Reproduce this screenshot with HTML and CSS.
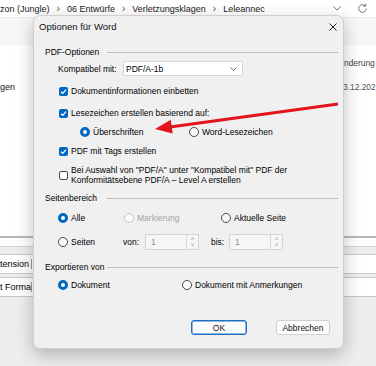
FILE: index.html
```html
<!DOCTYPE html>
<html lang="de">
<head>
  <meta charset="UTF-8">
  <title>Optionen für Word</title>
  <link rel="stylesheet" href="styles.css">
</head>
<body>
  <!-- Explorer im Hintergrund -->
  <div class="explorer">
    <div class="crumbs">
      <span>zon (Jungle)</span><i>&rsaquo;</i>
      <span>06 Entwürfe</span><i>&rsaquo;</i>
      <span>Verletzungsklagen</span><i>&rsaquo;</i>
      <span>Leleannec</span>
      <div class="crumb-tools">
        <svg width="8" height="5" viewBox="0 0 8 5"><polyline points="0.5,0.5 4,4 7.5,0.5" fill="none" stroke="#777" stroke-width="1"/></svg>
        <svg width="11" height="11" viewBox="0 0 11 11"><path d="M9.3 5.5a3.8 3.8 0 1 1-1.1-2.7" fill="none" stroke="#777" stroke-width="1"/><polyline points="8.6,0.8 8.6,3.2 6.2,3.2" fill="none" stroke="#777" stroke-width="1"/></svg>
      </div>
    </div>
    <div class="toolbar"></div>
    <div class="files">
      <div></div><div class="col-head">nderung</div>
      <div class="file-name">gen</div><div class="file-date">3.12.202</div>
    </div>
    <div class="lower">
      <div class="strip"></div>
      <div class="field"><span>tension</span></div>
      <div class="field"><span>t Forma</span></div>
    </div>
  </div>

  <!-- Dialog -->
  <div class="dialog">
    <div class="titlebar">
      <span>Optionen für Word</span>
      <svg width="8" height="8" viewBox="0 0 8 8"><path d="M0.5 0.5L7.5 7.5M7.5 0.5L0.5 7.5" stroke="#222" stroke-width="1"/></svg>
    </div>
    <div class="content">
      <div class="group-head mt8"><span>PDF-Optionen</span><div class="rule"></div></div>

      <div class="row compat mt2">
        <span class="lbl">Kompatibel mit:</span>
        <div class="select">PDF/A-1b
          <svg width="7" height="4" viewBox="0 0 7 4"><polyline points="0.5,0.5 3.5,3.5 6.5,0.5" fill="none" stroke="#666" stroke-width="1"/></svg>
        </div>
      </div>

      <label class="row check mt8"><span class="box on"></span>Dokumentinformationen einbetten</label>
      <label class="row check mt8"><span class="box on"></span>Lesezeichen erstellen basierend auf:</label>
      <div class="row sub mt5">
        <label class="opt w109"><span class="radio on"></span>Überschriften</label>
        <label class="opt"><span class="radio"></span>Word-Lesezeichen</label>
      </div>
      <label class="row check mt5"><span class="box on"></span>PDF mit Tags erstellen</label>
      <label class="row check two mt7"><span class="box"></span>Bei Auswahl von "PDF/A" unter "Kompatibel mit" PDF der<br>Konformitätsebene PDF/A – Level A erstellen</label>

      <div class="group-head mt6"><span>Seitenbereich</span><div class="rule"></div></div>
      <div class="row radios mt6">
        <label class="opt w66"><span class="radio on"></span>Alle</label>
        <label class="opt w97 off"><span class="radio"></span>Markierung</label>
        <label class="opt"><span class="radio"></span>Aktuelle Seite</label>
      </div>
      <div class="row pages mt9">
        <label class="opt w65"><span class="radio"></span>Seiten</label>
        <span class="w22">von:</span>
        <div class="spin">1<span class="arrows"><i>&#708;</i><i>&#709;</i></span></div>
        <span class="w18 ml12">bis:</span>
        <div class="spin">1<span class="arrows"><i>&#708;</i><i>&#709;</i></span></div>
      </div>

      <div class="group-head mt10"><span>Exportieren von</span><div class="rule"></div></div>
      <div class="row radios mt4">
        <label class="opt w124"><span class="radio on"></span>Dokument</label>
        <label class="opt"><span class="radio"></span>Dokument mit Anmerkungen</label>
      </div>

      <div class="buttons">
        <button class="default">OK</button>
        <button>Abbrechen</button>
      </div>
    </div>
  </div>

  <svg class="arrow" width="376" height="366" viewBox="0 0 376 366">
    <line x1="338" y1="104" x2="170" y2="127" stroke="#e3141c" stroke-width="3"/>
    <polygon points="155,129 172.7,133.6 170.7,119.8" fill="#e3141c"/>
  </svg>
</body>
</html>
```

FILE: styles.css
```css
body { margin: 0; width: 376px; height: 366px; overflow: hidden; position: relative; background: #fff; font-family: "Liberation Sans", Arial, sans-serif; color: #000; }

/* Hintergrund */
.explorer { display: flex; flex-direction: column; height: 366px; background: #eeeeee; }
.crumbs { height: 17px; display: flex; align-items: center; font-size: 9px; color: #1b1b1b; background: #fff; white-space: nowrap; }
.crumbs i { font-style: normal; color: #555; margin: 0 7px; font-size: 10px; }
.crumb-tools { margin-left: auto; display: flex; align-items: center; gap: 16px; padding-right: 8px; }
.toolbar { height: 27px; background: #f7f7f7; border-top: 1px solid #ececec; }
.files { height: 191px; background: #fff; display: grid; grid-template-columns: 343px 1fr; grid-template-rows: 14px 14px; row-gap: 10px; padding-top: 11px; box-sizing: border-box; font-size: 8.4px; white-space: nowrap; overflow: hidden; align-items: center; }
.col-head { color: #444; margin-left: 1px; }
.file-date { color: #555; }
.file-name { color: #111; font-size: 9px; }
.lower { flex: 1; border-top: 2px solid #b9b9b9; }
.strip { height: 8px; background: #fff; border-bottom: 1px solid #d4d4d4; }
.field { height: 18px; margin-top: 7px; background: #fff; border-top: 1px solid #c9c9c9; border-bottom: 1px solid #c9c9c9; display: flex; align-items: center; font-size: 9px; }
.field + .field { margin-top: 3px; }
.field span { width: 31px; border-right: 1px solid #9a9a9a; overflow: hidden; white-space: nowrap; }

/* Dialog */
.dialog { position: absolute; left: 33px; top: 15px; width: 311px; height: 334px; box-sizing: border-box; background: #f0f0f0; border: 1px solid #cfcfcf; border-radius: 7px; box-shadow: 0 6px 18px rgba(0,0,0,.25); font-size: 8.5px; }
.titlebar { height: 21px; display: flex; align-items: center; justify-content: space-between; padding: 0 6px 0 5px; font-size: 9.5px; color: #111; }
.content { padding: 0 5px 0 11px; }
.group-head { height: 14px; display: flex; align-items: center; }
.group-head span { width: 62px; }
.rule { flex: 1; height: 1px; background: #bdbdbd; }
.row { display: flex; align-items: center; height: 14px; margin-left: 13px; white-space: nowrap; }
.check { margin-left: 14px; }
.check .box { margin-right: 3px; }
.two { height: 20px; line-height: 10px; }
.sub { margin-left: 35px; }
.opt { display: flex; align-items: center; }
.opt .radio { margin-right: 3px; }
.off { color: #a3a3a3; }
.off .radio { border-color: #c4c4c4; }

.mt2 { margin-top: 2px; } .mt4 { margin-top: 4px; } .mt5 { margin-top: 5px; } .mt6 { margin-top: 6px; }
.mt7 { margin-top: 7px; } .mt8 { margin-top: 8px; } .mt9 { margin-top: 9px; } .mt10 { margin-top: 10px; }
.w18 { width: 18px; } .w22 { width: 22px; } .w65 { width: 65px; } .w66 { width: 66px; } .w97 { width: 97px; } .w109 { width: 109px; } .w124 { width: 124px; }
.ml12 { margin-left: 12px; }

.compat { height: 15px; }
.compat .lbl { width: 65px; }
.select { width: 120px; height: 15px; box-sizing: border-box; background: #fff; border: 1px solid #d6d6d6; border-radius: 2px; display: flex; align-items: center; justify-content: space-between; padding: 0 5px 0 2px; }

.box { width: 9px; height: 9px; box-sizing: border-box; border: 1px solid #4a4a4a; border-radius: 2px; background: #fff; flex: none; }
.box.on { border: none; background: #0067c0 url("data:image/svg+xml,%3Csvg xmlns='http://www.w3.org/2000/svg' width='9' height='9'%3E%3Cpath d='M2 4.7L3.8 6.4L7 2.7' fill='none' stroke='white' stroke-width='1.2'/%3E%3C/svg%3E") no-repeat center; }
.radio { width: 10px; height: 10px; box-sizing: border-box; border: 1px solid #4a4a4a; border-radius: 50%; background: #fbfbfb; flex: none; }
.radio.on { border: 3px solid #0067c0; background: #fff; }

.pages { height: 16px; }
.spin { width: 54px; height: 16px; box-sizing: border-box; border: 1px solid #d4d4d4; background: #f6f6f6; color: #8a8a8a; display: flex; align-items: center; justify-content: space-between; padding-left: 5px; }
.arrows { width: 11px; height: 14px; border-left: 1px solid #d9d9d9; display: flex; flex-direction: column; align-items: center; justify-content: center; font-size: 6px; line-height: 6px; color: #888; }
.arrows i { font-style: normal; }

.buttons { display: flex; justify-content: flex-end; gap: 29px; margin-top: 28px; padding-right: 8px; }
button { width: 54px; height: 15px; padding: 0; font: inherit; background: #fdfdfd; border: 1px solid #d0d0d0; border-radius: 3px; color: #111; }
button.default { width: 56px; border: 1px solid #1f6fc5; box-shadow: inset 0 0 0 0.5px #1f6fc5; }

.arrow { position: absolute; left: 0; top: 0; pointer-events: none; }
```
